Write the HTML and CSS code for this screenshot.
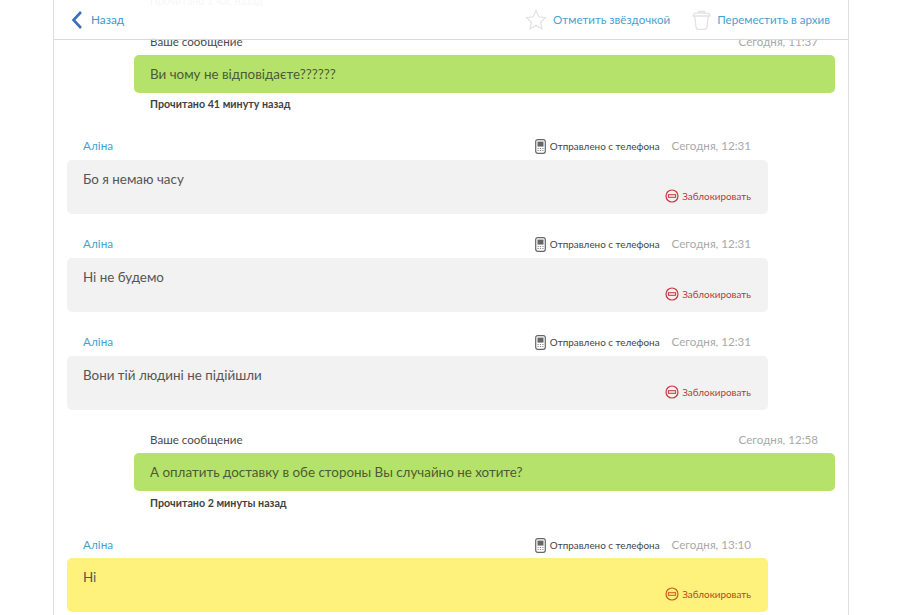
FILE: index.html
```html
<!DOCTYPE html>
<html lang="ru">
<head>
<meta charset="utf-8">
<title>Сообщения</title>
<link rel="stylesheet" href="styles.css">
</head>
<body>
<main class="panel">
  <header class="topbar">
    <a class="back">
      <svg class="back-icon" width="12" height="18" viewBox="0 0 12 18"><path d="M10 1 2.5 9l7.5 8" fill="none" stroke="#3a70b8" stroke-width="2.6"/></svg>
      Назад
    </a>
    <div class="actions">
      <a class="action">
        <svg width="22" height="21" viewBox="0 0 22 21"><path d="M11 1.5l2.9 6.3 6.6.8-4.9 4.6 1.3 6.6L11 16.5l-5.9 3.3 1.3-6.6L1.5 8.6l6.6-.8z" fill="none" stroke="#e2e2e2" stroke-width="1.2"/></svg>
        Отметить звёздочкой
      </a>
      <a class="action">
        <svg width="19" height="20" viewBox="0 0 19 20"><path d="M6.5 3.2V1.5h6v1.7M1.2 6q0-2.8 3-2.8h10.6q3 0 3 2.8zM2.8 6.5l1.2 10.5q.3 2.3 2.5 2.3h6q2.2 0 2.5-2.3l1.2-10.5" fill="none" stroke="#e2e2e2" stroke-width="1.3"/></svg>
        Переместить в архив
      </a>
    </div>
  </header>

  <section class="thread">
    <p class="read first">Прочитано 1 час назад</p>

    <article class="msg sent top">
      <div class="head"><span class="who">Ваше сообщение</span><time class="date">Сегодня, 11:37</time></div>
      <div class="bubble">Ви чому не відповідаєте??????</div>
      <p class="read">Прочитано 41 минуту назад</p>
    </article>

    <article class="msg recv after-read">
      <div class="head"><a class="name">Аліна</a><span class="meta"><svg class="phone" width="11" height="15" viewBox="0 0 11 15"><rect x=".7" y=".7" width="9.6" height="13.6" rx="2" fill="#fff" stroke="#666" stroke-width="1.2"/><rect x="2.5" y="2.6" width="6" height="5" fill="#666"/><path d="M2.5 9.5h6M2.5 11.5h6" stroke="#888" stroke-dasharray="1.2 1.2"/></svg><span class="via">Отправлено с телефона</span><time class="date">Сегодня, 12:31</time></span></div>
      <div class="bubble">
        <p class="text">Бо я немаю часу</p>
        <a class="block"><svg width="14" height="14" viewBox="0 0 14 14"><circle cx="7" cy="7" r="6" fill="none" stroke="#c9343a" stroke-width="1.2"/><rect x="3.4" y="5.7" width="7.2" height="2.6" fill="none" stroke="#c9343a"/></svg>Заблокировать</a>
      </div>
    </article>

    <article class="msg recv">
      <div class="head"><a class="name">Аліна</a><span class="meta"><svg class="phone" width="11" height="15" viewBox="0 0 11 15"><rect x=".7" y=".7" width="9.6" height="13.6" rx="2" fill="#fff" stroke="#666" stroke-width="1.2"/><rect x="2.5" y="2.6" width="6" height="5" fill="#666"/><path d="M2.5 9.5h6M2.5 11.5h6" stroke="#888" stroke-dasharray="1.2 1.2"/></svg><span class="via">Отправлено с телефона</span><time class="date">Сегодня, 12:31</time></span></div>
      <div class="bubble">
        <p class="text">Ні не будемо</p>
        <a class="block"><svg width="14" height="14" viewBox="0 0 14 14"><circle cx="7" cy="7" r="6" fill="none" stroke="#c9343a" stroke-width="1.2"/><rect x="3.4" y="5.7" width="7.2" height="2.6" fill="none" stroke="#c9343a"/></svg>Заблокировать</a>
      </div>
    </article>

    <article class="msg recv">
      <div class="head"><a class="name">Аліна</a><span class="meta"><svg class="phone" width="11" height="15" viewBox="0 0 11 15"><rect x=".7" y=".7" width="9.6" height="13.6" rx="2" fill="#fff" stroke="#666" stroke-width="1.2"/><rect x="2.5" y="2.6" width="6" height="5" fill="#666"/><path d="M2.5 9.5h6M2.5 11.5h6" stroke="#888" stroke-dasharray="1.2 1.2"/></svg><span class="via">Отправлено с телефона</span><time class="date">Сегодня, 12:31</time></span></div>
      <div class="bubble">
        <p class="text">Вони тій людині не підійшли</p>
        <a class="block"><svg width="14" height="14" viewBox="0 0 14 14"><circle cx="7" cy="7" r="6" fill="none" stroke="#c9343a" stroke-width="1.2"/><rect x="3.4" y="5.7" width="7.2" height="2.6" fill="none" stroke="#c9343a"/></svg>Заблокировать</a>
      </div>
    </article>

    <article class="msg sent">
      <div class="head"><span class="who">Ваше сообщение</span><time class="date">Сегодня, 12:58</time></div>
      <div class="bubble">А оплатить доставку в обе стороны Вы случайно не хотите?</div>
      <p class="read">Прочитано 2 минуты назад</p>
    </article>

    <article class="msg recv after-read new">
      <div class="head"><a class="name">Аліна</a><span class="meta"><svg class="phone" width="11" height="15" viewBox="0 0 11 15"><rect x=".7" y=".7" width="9.6" height="13.6" rx="2" fill="#fff" stroke="#666" stroke-width="1.2"/><rect x="2.5" y="2.6" width="6" height="5" fill="#666"/><path d="M2.5 9.5h6M2.5 11.5h6" stroke="#888" stroke-dasharray="1.2 1.2"/></svg><span class="via">Отправлено с телефона</span><time class="date">Сегодня, 13:10</time></span></div>
      <div class="bubble">
        <p class="text">Ні</p>
        <a class="block"><svg width="14" height="14" viewBox="0 0 14 14"><circle cx="7" cy="7" r="6" fill="none" stroke="#d0561e" stroke-width="1.2"/><rect x="3.4" y="5.7" width="7.2" height="2.6" fill="none" stroke="#d0561e"/></svg>Заблокировать</a>
      </div>
    </article>
  </section>
</main>
</body>
</html>
```

FILE: styles.css
```css
* { box-sizing: border-box; }
html, body { margin: 0; height: 615px; overflow: hidden; background: #fff; }
body { font-family: Lato, "Noto Sans", sans-serif; color: #4a4a4a; font-size: 14px; }
p { margin: 0; }
.panel {
  position: relative;
  width: 796px;
  height: 615px;
  margin-left: 53px;
  border-left: 1px solid #dedede;
  border-right: 1px solid #dedede;
  overflow: hidden;
}
.topbar {
  position: absolute;
  top: 0; left: 0; right: 0;
  height: 40px;
  display: flex;
  align-items: center;
  justify-content: space-between;
  padding: 0 18px 0 17px;
  background: rgba(255,255,255,.92);
  border-bottom: 1px solid #d9d9d9;
  z-index: 2;
}
.back { display: flex; align-items: center; gap: 8px; color: #3f97cf; font-size: 11.8px; }
.actions { display: flex; align-items: center; gap: 22px; }
.action { display: flex; align-items: center; gap: 6px; color: #4a9fd0; font-size: 11.6px; }
.thread { margin-top: -5px; }
.read { font-size: 10.7px; font-weight: 700; color: #3f3f3f; line-height: 12px; margin: 6px 0 0 96px; }
.read.first { color: #888; font-weight: 400; margin-top: 0; }
.msg { margin-top: 23px; }
.msg.top { margin-top: 28px; }
.sent.top .read { margin-top: 5px; }
.head { display: flex; justify-content: space-between; align-items: center; height: 14px; line-height: 14px; }
.date { font-size: 11.6px; color: #a9a9a9; }
.who { font-size: 11.6px; color: #4a4a4a; }
.name { font-size: 11.7px; color: #4a9fd0; margin-bottom: 2px; }
.bubble { border-radius: 5px; font-size: 13.4px; }
.sent { margin-left: 80px; width: 701px; }
.sent .head { padding: 0 17px 0 16px; margin-bottom: 6px; }
.sent .bubble { background: #b5e26a; height: 38px; line-height: 38px; padding: 0 16px; color: #4d5a35; }
.sent .read { margin-left: 16px; }
.recv { margin-left: 13px; width: 701px; }
.recv .head { padding: 0 17px 0 16px; margin-bottom: 7px; }
.recv .bubble { background: #f2f2f2; height: 54px; padding: 10px 17px 0 16px; display: flex; flex-direction: column; color: #555; }
.text { line-height: 18px; }
.meta { display: flex; align-items: center; }
.phone { margin-right: 4px; }
.via { font-size: 9.9px; color: #444; margin-right: 12px; }
.block { align-self: flex-end; display: flex; align-items: center; gap: 3px; font-size: 9.9px; color: #b7393c; margin-top: 1px; }
.after-read { margin-top: 29px; }
.new .head { margin-bottom: 6px; }
.new .bubble { background: #fff27c; }
.new .block { color: #b3471c; }
```
